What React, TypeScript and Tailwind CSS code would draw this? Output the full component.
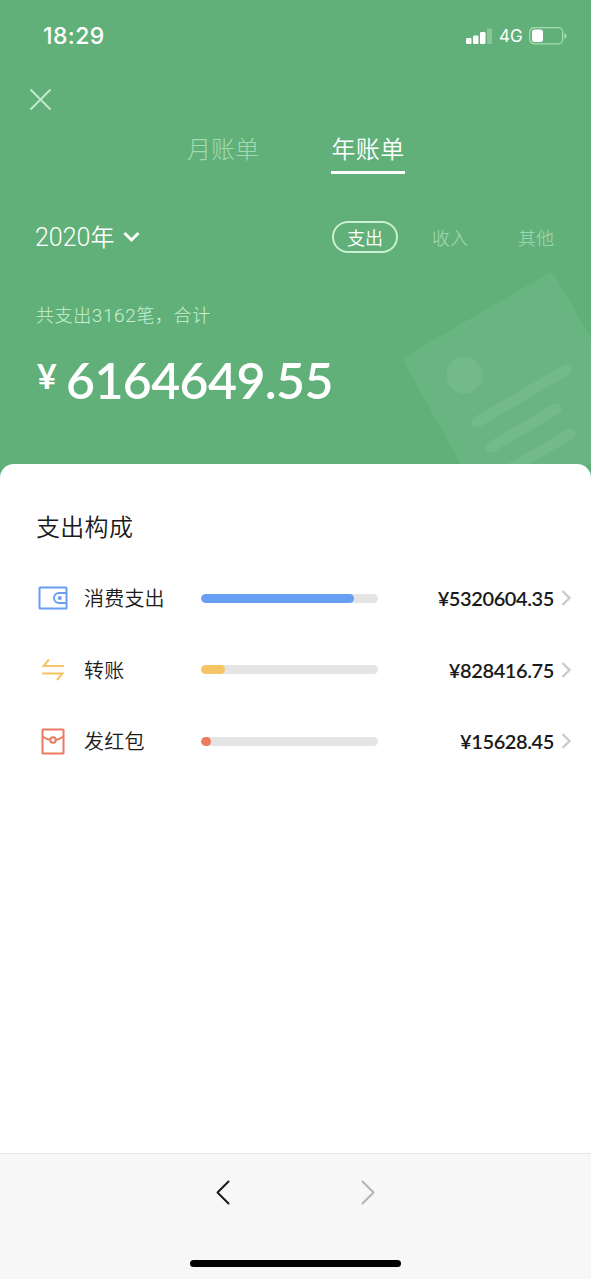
import type { ReactNode } from 'react'

interface ExpenseItem {
    name: string
    amount: string
    percent: number
    barClass: string
    icon: ReactNode
}

const items: ExpenseItem[] = [
    { name: '消费支出', amount: '¥5320604.35', percent: 86.4, barClass: 'bg-[#689ff3]', icon: <WalletIcon /> },
    { name: '转账', amount: '¥828416.75', percent: 13.5, barClass: 'bg-[#f4c465]', icon: <TransferIcon /> },
    { name: '发红包', amount: '¥15628.45', percent: 5.5, barClass: 'bg-[#eb7b60]', icon: <RedPacketIcon /> },
]

export default function App() {
    return (
        <div className="relative flex h-[1279px] w-[591px] flex-col overflow-hidden bg-[#62b079] font-['Noto_Sans_CJK_SC',sans-serif]">
            <Watermark />
            <StatusBar />

            {/* Header */}
            <header className="relative flex h-[392px] flex-col text-white">
                <div className="flex h-[55px] items-center pl-[30px]">
                    <svg width="21" height="21" viewBox="0 0 21 21" fill="none" stroke="#c4ebcf" strokeWidth="1.8" strokeLinecap="round">
                        <path d="M1 1l19 19M20 1L1 20" />
                    </svg>
                </div>

                <div className="flex h-[48px] items-start pl-[187px] text-2xl leading-[41px] font-light">
                    <span className="w-[144px] text-[#a3dab2]">月账单</span>
                    <span className="h-[47px] w-[74px] border-b-[3px] border-white text-center font-[350] tracking-[0.3px]">年账单</span>
                </div>

                <div className="mt-[44px] flex h-[36px] items-center pl-[35px]">
                    <span className="text-2xl leading-none font-[350]"><span className="font-['Roboto',sans-serif] text-[25px] font-light">2020</span>年</span>
                    <svg className="ml-[9px]" width="17" height="12" viewBox="0 0 17 12" fill="none" stroke="#fff" strokeWidth="3">
                        <path d="M1.500 2l7 7 7-7" />
                    </svg>
                    <div className="ml-auto flex items-center pr-[37px] text-[18px] leading-none font-light text-[#a3dab2]">
                        <span className="flex h-8 w-[66px] items-center justify-center rounded-full border-2 border-[#c9f0d2] pb-px font-[350] text-white">支出</span>
                        <span className="ml-[34px] pb-px">收入</span>
                        <span className="ml-[50px] pb-px">其他</span>
                    </div>
                </div>

                <p className="mt-[45px] pl-[36px] text-[18px] leading-[28px] font-light tracking-[0.6px] text-[#cbf1d5]">
                    共支出<span className="font-['Roboto',sans-serif] text-[19px]">3162</span>笔，合计
                </p>
                <div className="mt-[19px] flex h-[62px] items-center pl-[37px] font-['Lato',sans-serif] font-semibold">
                    <span className="relative -top-[4px] w-[29px] text-[34px] leading-none font-bold">¥</span>
                    <span className="text-[50px] leading-none tracking-[-0.6px]">6164649.55</span>
                </div>
            </header>

            {/* Breakdown */}
            <main className="relative flex-1 rounded-t-[14px] bg-white pt-[42px] font-[350] text-[#1a1a1a]">
                <h2 className="pl-[36px] text-2xl leading-[40px] tracking-[0.3px]">支出构成</h2>
                <ul className="mt-[16.500px]">
                    {items.map(item => (
                        <ExpenseRow key={item.name} item={item} />
                    ))}
                </ul>
            </main>

            <BottomNav />
        </div>
    )
}

function StatusBar() {
    return (
        <div className="relative flex h-[72px] items-center justify-between pr-[24px] pl-[43px] font-['Inter',sans-serif] text-white">
            <span className="text-[23px] font-medium tracking-[0.4px]">18:29</span>
            <div className="flex items-center">
                <svg width="26" height="17" viewBox="0 0 26 17" fill="#fff">
                    <rect x="0" y="10" width="5.500" height="6" rx="1.200" />
                    <rect x="7" y="7.500" width="5.500" height="8.500" rx="1.200" />
                    <rect x="14" y="4" width="5.500" height="12" rx="1.200" />
                    <rect x="21" y="0.500" width="5" height="15.500" rx="1.200" opacity="0.250" />
                </svg>
                <span className="ml-[7px] w-[30px] text-[17px] leading-none font-normal">4G</span>
                <svg width="38" height="18" viewBox="0 0 38 18" fill="none">
                    <rect x="0.700" y="0.700" width="33" height="16.100" rx="4.500" stroke="#a8dcb5" strokeWidth="1.200" />
                    <rect x="3" y="2.500" width="11" height="12.500" rx="2.500" fill="#fff" />
                    <path d="M35.500 6v6c1.300-.6 2-1.700 2-3s-.7-2.400-2-3z" fill="#a8dcb5" />
                </svg>
            </div>
        </div>
    )
}

function ExpenseRow({ item }: { item: ExpenseItem }) {
    return (
        <li className="flex h-[71.500px] items-center pr-[19px] pl-[37px]">
            <div className="flex w-[32px] justify-center">{item.icon}</div>
            <span className="ml-[15px] w-[117px] text-[20px] leading-none tracking-[0.2px]">{item.name}</span>
            <div className="h-[9px] w-[177px] overflow-hidden rounded-full bg-[#e5e5e5]">
                <div className={`h-full rounded-full ${item.barClass}`} style={{ width: `${item.percent}%` }} />
            </div>
            <span className="ml-auto font-['Lato',sans-serif] text-[20px] leading-none font-semibold tracking-[-0.4px]">{item.amount}</span>
            <svg className="ml-[7px]" width="11" height="16" viewBox="0 0 11 16" fill="none" stroke="#cbcbcb" strokeWidth="2.4">
                <path d="M1.500 1l7 7-7 7" />
            </svg>
        </li>
    )
}

function BottomNav() {
    return (
        <nav className="flex h-[126px] flex-col items-center border-t border-[#e6e6e6] bg-[#f7f7f7]">
            <div className="flex h-[76px] w-[159px] items-center justify-between">
                <svg width="14" height="25" viewBox="0 0 14 25" fill="none" stroke="#1a1a1a" strokeWidth="2" strokeLinecap="round" strokeLinejoin="round">
                    <path d="M12.500 1.500L1.500 12.500l11 11" />
                </svg>
                <svg width="14" height="25" viewBox="0 0 14 25" fill="none" stroke="#b5b5b5" strokeWidth="2" strokeLinecap="round" strokeLinejoin="round">
                    <path d="M1.500 1.500l11 11-11 11" />
                </svg>
            </div>
            <div className="mt-[30px] h-[7px] w-[211px] rounded-full bg-black" />
        </nav>
    )
}

/* Faint tilted bill behind the header */
function Watermark() {
    return (
        <svg className="absolute top-[260px] right-0" width="201" height="220" viewBox="0 0 201 220" fill="none">
            <path d="M16 96L157 14q5-3 8 2l90 156-153 88L14 102q-2-4 2-6z" fill="#69b581" />
            <circle cx="74.300" cy="115.500" r="18.200" fill="#72ba88" />
            <path d="M87 162l89-52M101 187l65-38M115 212l65-38" stroke="#72ba88" strokeWidth="11" strokeLinecap="round" />
        </svg>
    )
}

function WalletIcon() {
    return (
        <svg width="30" height="24" viewBox="0 0 30 24" fill="none" stroke="#689ff3" strokeWidth="2">
            <rect x="1.500" y="1.500" width="27" height="21" rx="0.500" />
            <path d="M28.500 7H21a5 5 0 0 0 0 10h7.500" />
            <circle cx="21.800" cy="12" r="2" fill="#689ff3" stroke="none" />
        </svg>
    )
}

function TransferIcon() {
    return (
        <svg width="24" height="24" viewBox="0 0 24 24" fill="none" stroke="#f4c465" strokeWidth="2">
            <path d="M23 8H2.500l5.500-6.500M1 15.500h20.500L16 22" />
        </svg>
    )
}

function RedPacketIcon() {
    return (
        <svg width="24" height="27" viewBox="0 0 24 27" fill="none" stroke="#eb7b60" strokeWidth="2">
            <rect x="1.500" y="1.500" width="21" height="24" rx="0.500" />
            <path d="M1.500 8.500q4 2.800 7.700 3.200M14.800 11.700q3.700-.4 7.700-3.200" />
            <circle cx="12" cy="12" r="2.800" />
        </svg>
    )
}
